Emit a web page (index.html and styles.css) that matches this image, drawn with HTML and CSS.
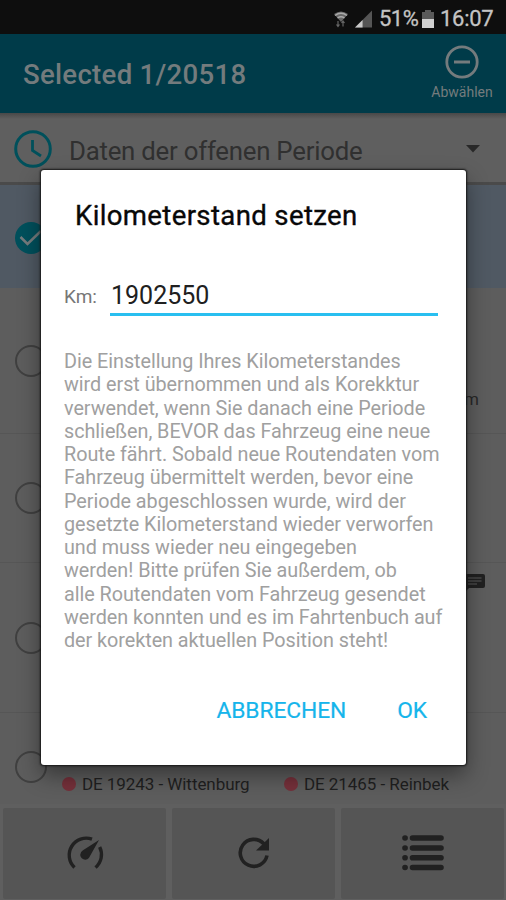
FILE: index.html
```html
<!DOCTYPE html>
<html lang="de">
<head>
<meta charset="utf-8">
<title>Kilometerstand setzen</title>
<link rel="stylesheet" href="styles.css">
</head>
<body>
<div class="phone">
  <div class="status">
    <svg class="wifi" width="16" height="18" viewBox="0 0 16 18"><path d="M1 4Q8-1 15 4L8 12Z" fill="#666"/><path d="M2 5.500Q8 1 14 5.500M4.500 8Q8 5.500 11.500 8" fill="none" stroke="#aaa" stroke-width="1.400"/><path d="M5 11v5M3.500 14.500L5 16.500L6.500 14.500M10 16.500v-5M8.500 13L10 11L11.500 13" fill="none" stroke="#666" stroke-width="1.200"/></svg>
    <svg class="signal" width="17" height="18" viewBox="0 0 18 18"><path d="M0 18L18 0V18Z" fill="#555"/><path d="M0 18L8 10V18Z" fill="#c8c8c8"/></svg>
    <span class="percent">51%</span>
    <svg class="battery" width="12" height="18" viewBox="0 0 12 18"><path d="M0 2H3V0H9V2H12V18H0Z" fill="#5a5a5a"/><path d="M0 9H12V18H0Z" fill="#d0d0d0"/></svg>
    <span class="time">16:07</span>
  </div>
  <header class="appbar">
    <h1>Selected 1/20518</h1>
    <div class="deselect">
      <svg width="34" height="34" viewBox="0 0 34 34" fill="none" stroke="#747b7d"><circle cx="17" cy="17" r="15.200" stroke-width="2.800"/><path d="M9 17H25" stroke-width="3"/></svg>
      <span>Abwählen</span>
    </div>
  </header>
  <div class="filter">
    <svg class="clock" width="40" height="40" viewBox="0 0 40 40" fill="none" stroke="#00505b"><circle cx="20" cy="20" r="17.300" stroke-width="3"/><path d="M19.500 11V21.500L28 27" stroke-width="2.800"/></svg>
    <span class="period">Daten der offenen Periode</span>
    <svg class="caret" width="14" height="8" viewBox="0 0 14 8"><path d="M0 0H14L7 7.500Z" fill="#282828"/></svg>
  </div>
  <main class="list">
    <div class="row selected"><svg class="check" width="34" height="34" viewBox="0 0 34 34"><circle cx="17" cy="17" r="16" fill="#00505c"/><path d="M6.500 16L13.500 23L27 10" fill="none" stroke="#747b7d" stroke-width="2.500"/></svg></div>
    <div class="row second"><i class="radio"></i><span class="unit">km</span></div>
    <div class="row third"><i class="radio"></i></div>
    <div class="row fourth"><i class="radio"></i><svg class="note" width="20" height="20" viewBox="0 0 20 20"><path d="M2 1H18Q20 1 20 3V13Q20 15 18 15H4L0 19V3Q0 1 2 1Z" fill="#202020"/><path d="M3 5H16.500M3 8H16.500M3 11H12" stroke="#5b5b5b" stroke-width="1.200"/></svg></div>
    <div class="row last"><i class="radio"></i>
      <div class="places"><span class="place"><i class="dot"></i><b class="from">DE 19243 - Wittenburg</b></span><span class="place"><i class="dot"></i><b class="to">DE 21465 - Reinbek</b></span></div>
    </div>
  </main>
  <nav class="actions">
    <div class="action"><svg width="40" height="36" viewBox="0 0 40 36"><path d="M9.500 32.500A17 17 0 0 1 27 4.200M34.700 12A17 17 0 0 1 30.500 32.500" fill="none" stroke="#212121" stroke-width="3.400"/><path d="M34 5L24.200 22.500C21 27 15.500 24 15.200 19.800Q15 17 18 15.200Z" fill="#212121"/></svg></div>
    <div class="action"><svg width="34" height="34" viewBox="0 0 34 34"><path d="M30 19.500A13.500 13.500 0 1 1 26.800 7.800" fill="none" stroke="#212121" stroke-width="3.600"/><path d="M32 2V14.500H19Z" fill="#212121"/></svg></div>
    <div class="action"><svg width="44" height="38" viewBox="0 0 44 38"><g stroke="#212121" stroke-width="5.600" stroke-linecap="round"><path d="M4 4H4.100M11.500 4H40M4 14H4.100M11.500 14H40M4 23.700H4.100M11.500 23.700H40M4 33.500H4.100M11.500 33.500H40"/></g></svg></div>
  </nav>
  <section class="dialog">
    <h2>Kilometerstand setzen</h2>
    <div class="field"><label>Km:</label><div class="input"><span>1902550</span></div></div>
    <p>Die Einstellung Ihres Kilometerstandes<br>wird erst übernommen und als Korekktur<br>verwendet, wenn Sie danach eine Periode<br>schließen, BEVOR das Fahrzeug eine neue<br>Route fährt. Sobald neue Routendaten vom<br>Fahrzeug übermittelt werden, bevor eine<br>Periode abgeschlossen wurde, wird der<br>gesetzte Kilometerstand wieder verworfen<br>und muss wieder neu eingegeben<br>werden! Bitte prüfen Sie außerdem, ob<br>alle Routendaten vom Fahrzeug gesendet<br>werden konnten und es im Fahrtenbuch auf<br>der korekten aktuellen Position steht!</p>
    <div class="buttons"><span class="cancel">ABBRECHEN</span><span class="ok">OK</span></div>
  </section>
</div>
</body>
</html>
```
FILE: styles.css
```css
* { box-sizing: border-box; }
body { margin: 0; font-family: Roboto, "Liberation Sans", sans-serif; }
h1, h2, p { margin: 0; font-weight: 400; }
svg { display: block; flex: none; }
.phone { position: relative; width: 506px; height: 900px; display: flex; flex-direction: column; background: #5d5d5d; overflow: hidden; white-space: nowrap; }
.status { height: 34px; flex: none; display: flex; align-items: center; justify-content: flex-end; padding: 3px 13px 0 0; background: #0e0e0e; color: #c4c4c4; font-size: 22px; line-height: 30px; -webkit-text-stroke: .3px #c4c4c4; }
.wifi { margin-right: 6px; }
.signal { margin-right: 7px; }
.percent { width: 39px; letter-spacing: -.5px; }
.battery { margin: 0 6px 0 4px; }
.time { width: 53px; letter-spacing: -.3px; }
.appbar { height: 79px; flex: none; display: flex; justify-content: space-between; background: #003b49; color: #747b7d; }
.appbar h1 { padding: 22px 0 0 23px; font-size: 27.6px; line-height: 38px; font-weight: 500; letter-spacing: .28px; }
.deselect { width: 64px; margin: 11px 12px 0 0; display: flex; flex-direction: column; align-items: center; font-size: 14px; line-height: 18px; }
.deselect span { margin-top: 4px; }
.filter { height: 72px; flex: none; display: flex; align-items: center; padding: 2px 26px 0 13px; border-bottom: 3px solid #4a4a4a; background: linear-gradient(#484848, #5f5f5f 6px); color: #303030; }
.period { flex: 1; padding: 4px 0 0 16px; font-size: 25.8px; line-height: 34px; letter-spacing: -.24px; }
.list { height: 619px; flex: none; }
.row { position: relative; display: flex; align-items: center; padding-left: 15px; border-bottom: 1px solid #565656; }
.selected { height: 103px; background: #505963; border: 0; padding: 2px 0 0 14px; }
.second { height: 146px; }
.third { height: 129px; }
.fourth { height: 150px; }
.last { height: 91px; align-items: flex-start; padding-top: 38px; border: 0; }
.radio { width: 32px; height: 32px; flex: none; border: 2px solid #404040; border-radius: 50%; }
.unit { margin: 77px 27px 0 auto; color: #282828; font-size: 17px; }
.note { margin: -109px 21px 0 auto; }
.places { display: grid; grid-template-columns: 222px 1fr; flex: 1; padding: 22px 0 0 15px; color: #1f1f1f; font-size: 17px; line-height: 22px; letter-spacing: -.06px; }
.place { display: flex; align-items: center; gap: 6px; }
.place b { font-weight: 400; }
.dot { width: 14px; height: 14px; border-radius: 50%; background: #75303a; }
.actions { height: 97px; flex: none; display: grid; grid-template-columns: repeat(3, 163px); gap: 6px; padding: 4px 3px 2px; background: #5f5f5f; }
.action { display: flex; align-items: center; justify-content: center; padding-bottom: 2px; background: #555; border-radius: 2px; }
.dialog { position: absolute; left: 41px; top: 170px; width: 425px; height: 595px; padding: 27px 23px 0; border-radius: 3px; background: #fff; box-shadow: 0 0 2px 1px #171717, 0 10px 22px rgba(0,0,0,.42); }
.dialog h2 { padding-left: 11px; color: #080808; font-size: 27.6px; line-height: 38px; letter-spacing: .34px; -webkit-text-stroke: .35px #080808; }
.field { display: flex; margin-top: 39px; height: 42px; }
.field label { width: 46px; padding-top: 11px; color: #777; font-size: 19px; line-height: 24px; }
.input { width: 328px; border-bottom: 3px solid #29bff0; color: #202020; font-size: 25px; line-height: 34px; padding: 5px 0 0 1px; }
.dialog p { margin-top: 34px; color: #a0a0a0; font-size: 19.8px; line-height: 23.25px; letter-spacing: -.04px; }
.buttons { display: flex; justify-content: flex-end; gap: 51px; margin-top: 43px; padding-right: 16px; color: #16b5eb; font-size: 22.8px; line-height: 32px; letter-spacing: -.1px; -webkit-text-stroke: .2px #16b5eb; }
```
